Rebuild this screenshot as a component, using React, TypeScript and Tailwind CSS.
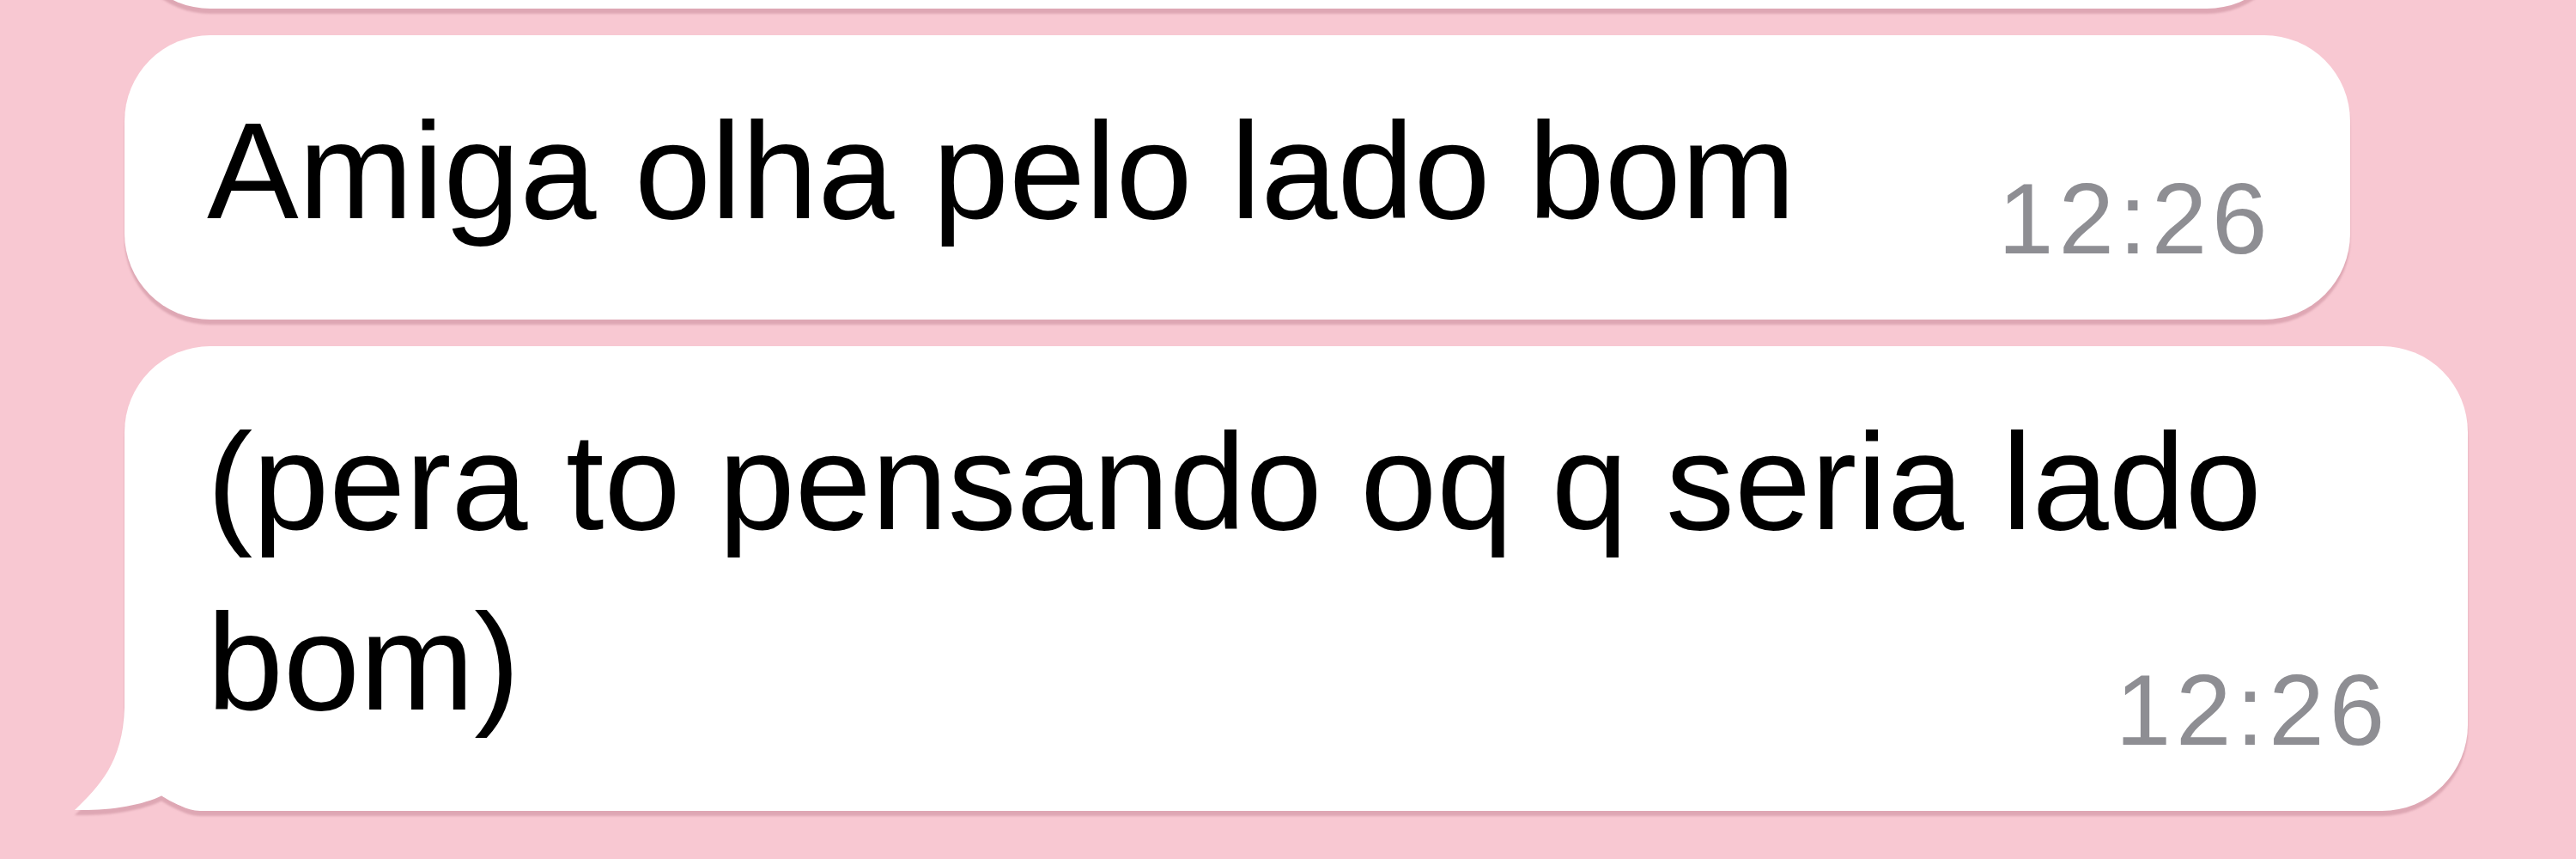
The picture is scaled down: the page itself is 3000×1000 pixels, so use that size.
import React from 'react';

const FONT = "font-['Liberation_Sans',Arial,sans-serif]";

function Time({ className = '' }: { className?: string }): React.JSX.Element {
  return (
    <span
      className={`shrink-0 text-[116px] leading-none tracking-[0.05em] text-[#8e8e93] ${className}`}
    >
      12:26
    </span>
  );
}

function Tail(): React.JSX.Element {
  // white corner + tail, covers the bubble's rounded bottom-left
  return (
    <svg
      className="absolute bottom-0 left-[-60px] h-[160px] w-[160px]"
      viewBox="0 0 160 160"
    >
      <path
        d="M60 0 L160 0 L160 160 L148 160 C 132 160, 118 150, 104 142 C 80 154, 40 160, 2 159 C 30 132, 58 104, 60 40 Z"
        fill="#ffffff"
      />
    </svg>
  );
}

export default function App(): React.JSX.Element {
  return (
    <div
      className={`flex h-[1000px] w-[3000px] flex-col items-start gap-[31px] overflow-hidden bg-[#f8c8d2] pl-[145px] ${FONT}`}
    >
      {/* previous message, cut off at the top */}
      <div className="-mt-[321px] h-[331px] w-[2525px] shrink-0 rounded-[100px] bg-white drop-shadow-[0_6px_1px_rgba(200,140,155,0.55)]" />

      <div className="flex shrink-0 items-start gap-[236px] rounded-[100px] bg-white pt-[53px] pr-[91px] pb-[59px] pl-[96px] drop-shadow-[0_6px_1px_rgba(200,140,155,0.55)]">
        <p className="text-[160px] leading-[210px] whitespace-nowrap text-black">
          Amiga olha pelo lado bom
        </p>
        <Time className="mt-[103px]" />
      </div>

      <div className="relative w-[2729px] shrink-0 drop-shadow-[0_6px_1px_rgba(200,140,155,0.55)]">
        <div className="flex flex-col rounded-[100px] bg-white pt-[53px] pr-[91px] pb-[59px] pl-[96px] text-[160px] leading-[210px] text-black">
          <p className="whitespace-nowrap">(pera to pensando oq q seria lado</p>
          <div className="flex items-start justify-between">
            <p>bom)</p>
            <Time className="mt-[103px]" />
          </div>
        </div>
        <Tail />
      </div>
    </div>
  );
}
